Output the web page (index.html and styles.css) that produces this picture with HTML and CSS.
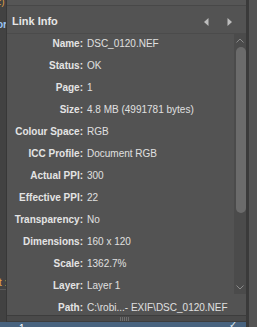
FILE: index.html
```html
<!DOCTYPE html>
<html lang="en">
<head>
    <meta charset="UTF-8">
    <meta name="viewport" content="width=device-width, initial-scale=1.0">
    <title>Link Info</title>
    <link rel="stylesheet" href="styles.css">
</head>
<body>
    <div class="screen">
        <div class="main">
            <div class="upper">
                <div class="side">
                    <span class="side-top">:)</span>
                    <span class="side-tab">or</span>
                    <span class="side-low">t :</span>
                </div>
                <div class="panel">
                    <div class="panel-top"></div>
                    <div class="panel-head">
                        <span class="title">Link Info</span>
                        <div class="nav">
                            <svg width="5" height="8" viewBox="0 0 5 8"><path d="M4.5 0 L0 4 L4.5 8 Z" fill="#bdbdbd"/></svg>
                            <svg width="5" height="8" viewBox="0 0 5 8"><path d="M0.5 0 L5 4 L0.5 8 Z" fill="#bdbdbd"/></svg>
                        </div>
                    </div>
                    <div class="panel-body">
                        <div class="info">
                            <span class="label">Name:</span><span class="value">DSC_0120.NEF</span>
                            <span class="label">Status:</span><span class="value">OK</span>
                            <span class="label">Page:</span><span class="value">1</span>
                            <span class="label">Size:</span><span class="value">4.8 MB (4991781 bytes)</span>
                            <span class="label">Colour Space:</span><span class="value">RGB</span>
                            <span class="label">ICC Profile:</span><span class="value">Document RGB</span>
                            <span class="label">Actual PPI:</span><span class="value">300</span>
                            <span class="label">Effective PPI:</span><span class="value">22</span>
                            <span class="label">Transparency:</span><span class="value">No</span>
                            <span class="label">Dimensions:</span><span class="value">160 x 120</span>
                            <span class="label">Scale:</span><span class="value">1362.7%</span>
                            <span class="label">Layer:</span><span class="value">Layer 1</span>
                            <span class="label">Path:</span><span class="value">C:\robi...- EXIF\DSC_0120.NEF</span>
                        </div>
                        <div class="vscroll">
                            <svg class="caret" width="8" height="5" viewBox="0 0 8 5"><path d="M0.5 4.5 L4 1 L7.5 4.5" fill="none" stroke="#8a8a8a" stroke-width="1"/></svg>
                            <div class="thumb"></div>
                            <svg class="caret caret-down" width="8" height="5" viewBox="0 0 8 5"><path d="M0.5 0.5 L4 4 L7.5 0.5" fill="none" stroke="#8a8a8a" stroke-width="1"/></svg>
                        </div>
                    </div>
                    <div class="hscroll"><span class="grip"></span></div>
                </div>
            </div>
            <div class="taskbar">
                <span class="task-one">1</span>
                <span class="task-check">&#10003;</span>
            </div>
        </div>
        <div class="divider"></div>
        <div class="gutter"></div>
    </div>
</body>
</html>
```

FILE: styles.css
```css
body {
    margin: 0;
    background: #424242;
    font-family: "Liberation Sans", Arial, sans-serif;
    font-size: 10px;
    color: #e2e2e2;
}
.screen {
    display: flex;
    width: 257px;
    height: 327px;
    overflow: hidden;
}
.main {
    display: flex;
    flex-direction: column;
    width: 246px;
}
.upper {
    display: flex;
    height: 322px;
}
.side {
    width: 6px;
    background: #424242;
    position: relative;
    overflow: hidden;
}
.side-top {
    position: absolute;
    top: -3px;
    left: -1px;
    color: #e8a447;
    font-size: 9px;
}
.side-tab {
    position: absolute;
    top: 19px;
    left: -3px;
    color: #9cc6f2;
    font-weight: bold;
}
.side-low {
    position: absolute;
    top: 277px;
    left: -1px;
    color: #e8a447;
    font-size: 10px;
    border-bottom: 1px solid #5a5a5a;
    padding-bottom: 1px;
    width: 10px;
}
.panel {
    width: 239px;
    border-left: 1px solid #383838;
    background: #535353;
    display: flex;
    flex-direction: column;
}
.panel-top {
    height: 5px;
    background: #565656;
    border-bottom: 1px solid #484848;
}
.panel-head {
    height: 24px;
    padding-top: 3px;
    display: flex;
    align-items: center;
    justify-content: space-between;
    padding-left: 5px;
}
.title {
    font-size: 11px;
    font-weight: bold;
    color: #e6e6e6;
}
.nav {
    display: flex;
    gap: 18px;
    margin-right: 14px;
    margin-top: 1px;
}
.nav svg {
    display: block;
}
.panel-body {
    height: 282px;
    display: flex;
    align-items: flex-start;
    box-shadow: inset 0 1px 0 #4b4b4b;
    overflow: hidden;
}
.info {
    width: 227px;
    display: grid;
    grid-template-columns: 76px 1fr;
    column-gap: 4px;
    line-height: 22px;
}
.label {
    text-align: right;
    font-weight: bold;
    color: #e4e4e4;
}
.value {
    white-space: nowrap;
    color: #e0e0e0;
}
.vscroll {
    width: 12px;
    height: 261px;
    background: #4b4b4b;
    display: flex;
    flex-direction: column;
    align-items: center;
}
.caret {
    display: block;
    margin-top: 5px;
}
.thumb {
    width: 10px;
    height: 166px;
    margin-top: 4px;
    margin-left: 1px;
    background: #6b6b6b;
    border-radius: 5px;
}
.caret-down {
    margin-top: 72px;
}
.hscroll {
    height: 5px;
    border-top: 1px solid #3d3d3d;
    border-bottom: 1px solid #3d3d3d;
    background: #4a4a4a;
    display: flex;
    justify-content: center;
    align-items: center;
}
.grip {
    width: 10px;
    height: 4px;
    margin-right: 4px;
    background: repeating-linear-gradient(90deg, #6e6e6e 0, #6e6e6e 1px, transparent 1px, transparent 2px);
}
.taskbar {
    height: 5px;
    background: #48637f;
    position: relative;
    overflow: hidden;
}
.task-one {
    position: absolute;
    left: 19px;
    top: 1px;
    color: #ffffff;
    font-size: 10px;
}
.task-check {
    position: absolute;
    left: 229px;
    top: -3px;
    color: #dfe6ee;
    font-size: 10px;
}
.divider {
    width: 3px;
    background: #3a3a3a;
}
.gutter {
    width: 8px;
    background: #545454;
}
```
